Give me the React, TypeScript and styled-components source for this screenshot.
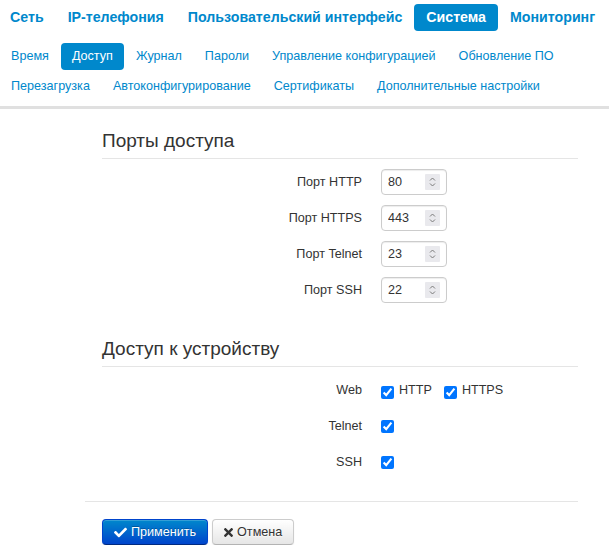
import styled, { createGlobalStyle } from "styled-components"
import { FaCheck, FaTimes } from "react-icons/fa"

const GlobalStyle = createGlobalStyle`
  body {
    margin: 0;
    background: #fff;
    color: #333;
    font-family: "Liberation Sans", Arial, sans-serif;
  }
`

const TopNav = styled.nav`
  display: flex;
  margin: 4px 0 0 -2px;
`

const TopLink = styled.a<{ $active?: boolean }>`
  display: block;
  height: 27px;
  line-height: 27px;
  padding: 0 12px;
  border-radius: 4px;
  font-size: 14.2px;
  font-weight: bold;
  text-decoration: none;
  white-space: nowrap;
  color: ${(p) => (p.$active ? "#fff" : "#0088cc")};
  background: ${(p) => (p.$active ? "#0088cc" : "transparent")};
`

const SubNav = styled.nav`
  display: flex;
  flex-wrap: wrap;
  row-gap: 3px;
  margin: 12px 0 0 0;
`

const SubLink = styled.a<{ $active?: boolean }>`
  display: block;
  height: 27px;
  line-height: 27px;
  padding: 0 11px;
  margin-right: 1px;
  border-radius: 4px;
  font-size: 12.6px;
  text-decoration: none;
  white-space: nowrap;
  color: ${(p) => (p.$active ? "#fff" : "#0088cc")};
  background: ${(p) => (p.$active ? "#0088cc" : "transparent")};
`

const Divider = styled.div`
  height: 3px;
  margin-top: 6px;
  background: #e0e0e0;
`

const Form = styled.form`
  width: 493px;
  margin: 20px 0 0 85px;
`

const Section = styled.fieldset<{ $gap?: number }>`
  border: 0;
  margin: ${(p) => p.$gap ?? 0}px 0 0 0;
  padding: 0 0 0 17px;
`

const Legend = styled.h3`
  margin: 0 0 10px;
  padding-bottom: 6px;
  border-bottom: 1px solid #e5e5e5;
  font-size: 19px;
  line-height: 23px;
  font-weight: normal;
  color: #333;
`

const Rows = styled.div`
  display: flex;
  flex-direction: column;
  gap: 10px;
`

const Row = styled.div`
  display: grid;
  grid-template-columns: 260px 1fr;
  column-gap: 19px;
  align-items: center;
  height: 26px;
`

const Label = styled.label`
  text-align: right;
  font-size: 12.6px;
  color: #333;
`

const NumberBox = styled.div`
  display: flex;
  align-items: center;
  justify-content: space-between;
  box-sizing: border-box;
  width: 66px;
  height: 26px;
  padding: 0 6px;
  border: 1px solid #ccc;
  border-radius: 4px;
  background: #fff;
  box-shadow: inset 0 1px 1px rgba(0, 0, 0, 0.075);
`

const NumberInput = styled.input`
  width: 34px;
  border: 0;
  outline: 0;
  padding: 0;
  font-family: inherit;
  font-size: 12.6px;
  color: #333;
  background: transparent;
`

const Controls = styled.div`
  display: flex;
  align-items: center;
  gap: 12px;
`

const CheckLabel = styled.label`
  display: inline-flex;
  align-items: center;
  gap: 5px;
  font-size: 12.6px;
  color: #333;
`

const Check = styled.input<{ $drop?: number }>`
  width: 13px;
  height: 13px;
  margin: ${(p) => p.$drop ?? 0}px 0 0 0;
`

const Actions = styled.div`
  display: flex;
  gap: 4px;
  margin-top: 26px;
  padding: 17px 0 0 17px;
  border-top: 1px solid #e5e5e5;
`

const Button = styled.button<{ $primary?: boolean }>`
  display: inline-flex;
  align-items: center;
  gap: 4px;
  height: 26px;
  padding: 0 11px;
  border: 1px solid;
  border-radius: 4px;
  font-family: inherit;
  font-size: 12.6px;
  cursor: pointer;
  box-shadow: inset 0 1px 0 rgba(255, 255, 255, 0.2), 0 1px 2px rgba(0, 0, 0, 0.05);
  color: ${(p) => (p.$primary ? "#fff" : "#333")};
  text-shadow: ${(p) => (p.$primary ? "0 -1px 0 rgba(0,0,0,0.25)" : "0 1px 1px rgba(255,255,255,0.75)")};
  background: ${(p) =>
    p.$primary
      ? "linear-gradient(to bottom, #0088cc, #0044cc)"
      : "linear-gradient(to bottom, #ffffff, #e6e6e6)"};
  border-color: ${(p) =>
    p.$primary ? "#0044cc #0044cc #002a80" : "#ccc #ccc #b3b3b3"};
`

const OkIcon = styled(FaCheck)`
  width: 13px;
  height: 13px;
`

const CancelIcon = styled(FaTimes)`
  width: 9px;
  height: 13px;
`

function Spinner() {
  return (
    <svg width="15" height="16" viewBox="0 0 15 16">
      <rect width="15" height="16" rx="1" fill="#e9e9ed" />
      <path d="M5 6.5 L7.5 4 L10 6.5 M5 9.5 L7.5 12 L10 9.5" fill="none" stroke="#7a7a7a" strokeWidth="1" />
    </svg>
  )
}

const topItems = ["Сеть", "IP-телефония", "Пользовательский интерфейс", "Система", "Мониторинг"]
const subItems = [
  "Время",
  "Доступ",
  "Журнал",
  "Пароли",
  "Управление конфигурацией",
  "Обновление ПО",
  "Перезагрузка",
  "Автоконфигурирование",
  "Сертификаты",
  "Дополнительные настройки",
]
const ports = [
  { label: "Порт HTTP", value: "80" },
  { label: "Порт HTTPS", value: "443" },
  { label: "Порт Telnet", value: "23" },
  { label: "Порт SSH", value: "22" },
]

export default function App() {
  return (
    <>
      <GlobalStyle />
      <TopNav>
        {topItems.map((item) => (
          <TopLink key={item} $active={item === "Система"}>
            {item}
          </TopLink>
        ))}
      </TopNav>
      <SubNav>
        {subItems.map((item) => (
          <SubLink key={item} $active={item === "Доступ"}>
            {item}
          </SubLink>
        ))}
      </SubNav>
      <Divider />

      <Form onSubmit={(e) => e.preventDefault()}>
        <Section>
          <Legend>Порты доступа</Legend>
          <Rows>
            {ports.map((port) => (
              <Row key={port.label}>
                <Label>{port.label}</Label>
                <NumberBox>
                  <NumberInput defaultValue={port.value} />
                  <Spinner />
                </NumberBox>
              </Row>
            ))}
          </Rows>
        </Section>

        <Section $gap={34}>
          <Legend>Доступ к устройству</Legend>
          <Rows>
            <Row>
              <Label>Web</Label>
              <Controls>
                <CheckLabel>
                  <Check type="checkbox" defaultChecked $drop={4} />
                  HTTP
                </CheckLabel>
                <CheckLabel>
                  <Check type="checkbox" defaultChecked $drop={4} />
                  HTTPS
                </CheckLabel>
              </Controls>
            </Row>
            <Row>
              <Label>Telnet</Label>
              <Controls>
                <Check type="checkbox" defaultChecked />
              </Controls>
            </Row>
            <Row>
              <Label>SSH</Label>
              <Controls>
                <Check type="checkbox" defaultChecked />
              </Controls>
            </Row>
          </Rows>
        </Section>

        <Actions>
          <Button type="submit" $primary>
            <OkIcon />
            Применить
          </Button>
          <Button type="button">
            <CancelIcon />
            Отмена
          </Button>
        </Actions>
      </Form>
    </>
  )
}
